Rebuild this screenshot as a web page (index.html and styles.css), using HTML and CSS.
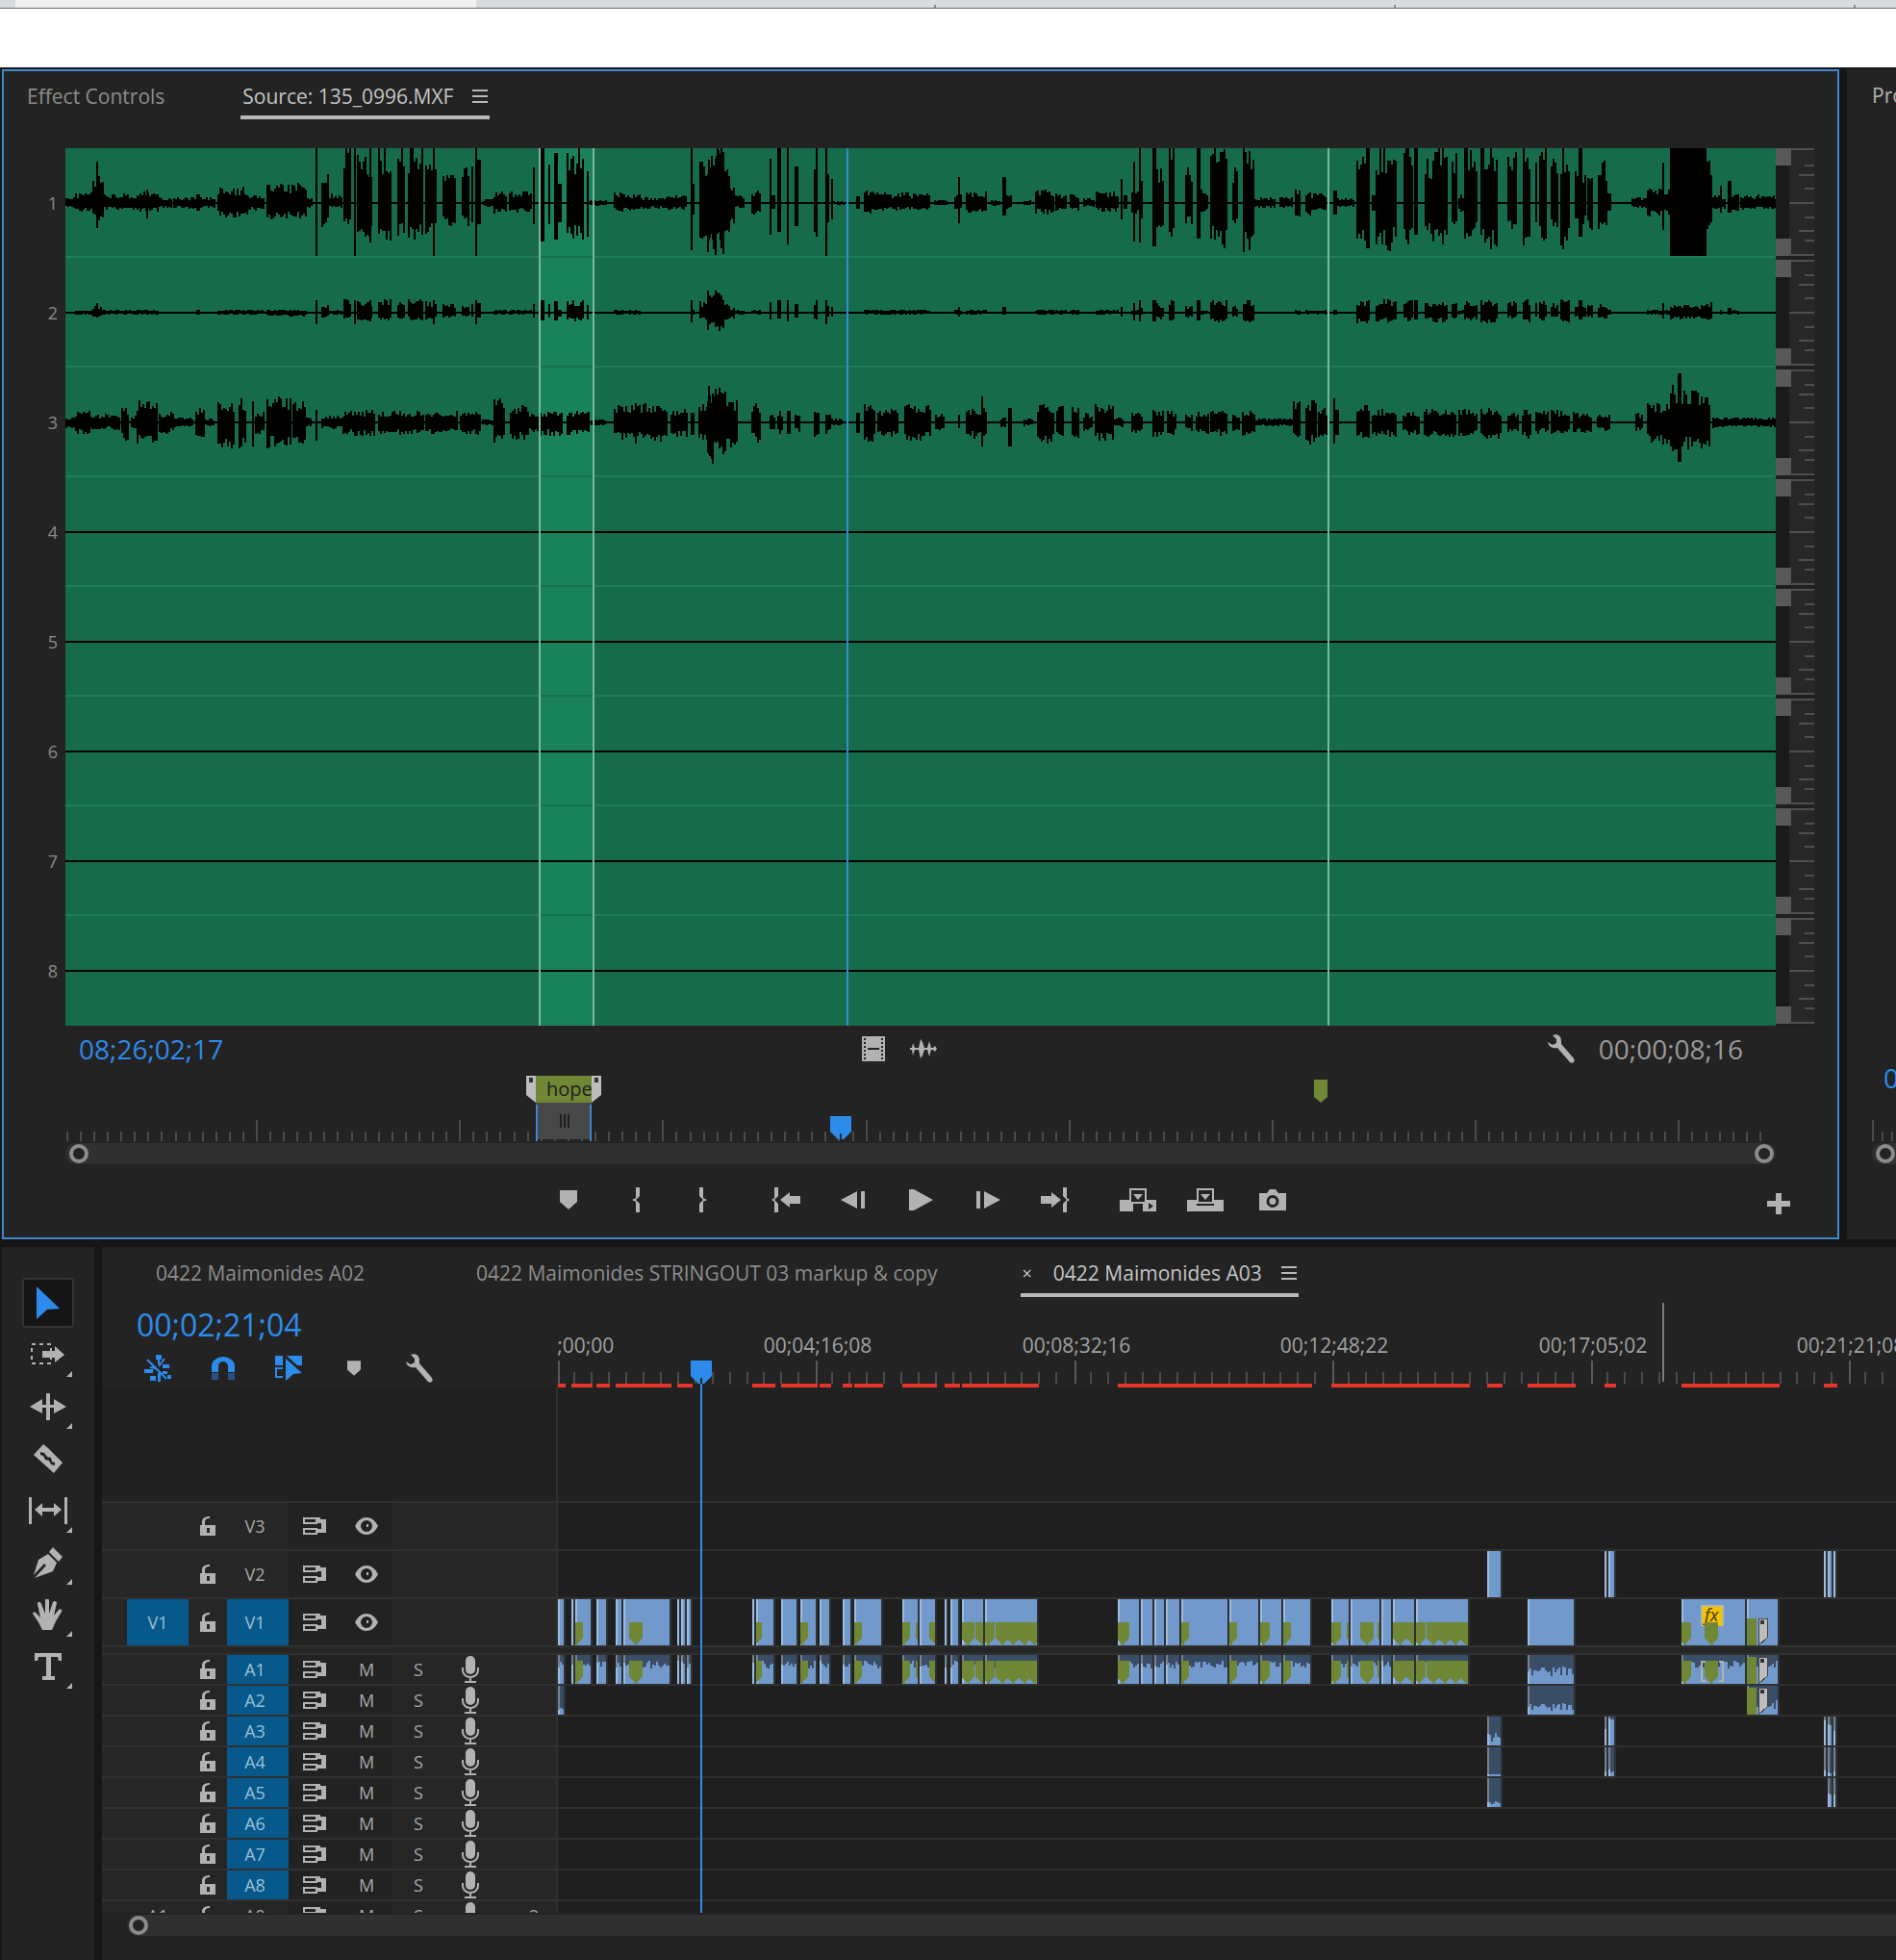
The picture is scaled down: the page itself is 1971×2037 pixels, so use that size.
FILE: index.html
```html
<!DOCTYPE html>
<html lang="en">
<head>
    <meta charset="UTF-8">
    <title>0422 Maimonides A03</title>
    <link rel="stylesheet" href="styles.css">
</head>
<body>
    <!-- shared icons -->
    <svg class="icon-defs" aria-hidden="true">
        <symbol id="i-marker" viewBox="0 0 18 20"><path d="M0 0h18v12l-9 8-9-8z"/></symbol>
        <symbol id="i-pin" viewBox="0 0 14 24"><path d="M0 0h14v18l-7 6-7-6z"/></symbol>
        <symbol id="i-in" viewBox="0 0 8 26"><path d="M8 0H4v11L0 13l4 2v11h4v-9l-4-4 4-4z"/></symbol>
        <symbol id="i-out" viewBox="0 0 8 26"><path d="M0 0h4v11l4 2-4 2v11H0v-9l4-4-4-4z"/></symbol>
        <symbol id="i-goin" viewBox="0 0 30 26"><path d="M7 0H3v11L0 13l3 2v11h4v-9l-4-4 4-4zM9 13l10-8v4h11v8H19v4z"/></symbol>
        <symbol id="i-goout" viewBox="0 0 30 26"><path d="M23 0h4v11l3 2-3 2v11h-4v-9l4-4-4-4zM21 13l-10-8v4H0v8h11v4z"/></symbol>
        <symbol id="i-back" viewBox="0 0 26 20"><path d="M0 10 17 1v18zM21 1h4v18h-4z"/></symbol>
        <symbol id="i-fwd" viewBox="0 0 26 20"><path d="M26 10 9 1v18zM1 1h4v18H1z"/></symbol>
        <symbol id="i-play" viewBox="0 0 26 22"><path d="M1 0h5l20 11L6 22H1z"/></symbol>
        <symbol id="i-insert" viewBox="0 0 38 24"><path fill-rule="evenodd" d="M0 12h10V0h18v12h10v12H24V14H14v10H0zM12 2v12h14V2zM30 15v7l5-3.500z"/><path d="M14 6h10l-5 6zM14 14h10v2H14z"/></symbol>
        <symbol id="i-overwrite" viewBox="0 0 38 24"><path fill-rule="evenodd" d="M0 12h10V0h18v12h10v12H0zM12 2v12h14V2zM10 16v2h18v-2z"/><path d="M14 6h10l-5 6z"/></symbol>
        <symbol id="i-camera" viewBox="0 0 28 22"><path fill-rule="evenodd" d="M0 4h8l3-4h6l3 4h8v18H0zM14 6a6 6 0 1 0 0 13 6 6 0 0 0 0-13zm0 3a3 3 0 1 1 0 7 3 3 0 0 1 0-7z"/></symbol>
        <symbol id="i-plus" viewBox="0 0 24 22"><path d="M9 0h6v8h9v6h-9v8H9v-8H0V8h9z"/></symbol>
        <symbol id="i-film" viewBox="0 0 24 26"><path fill-rule="evenodd" d="M0 0h24v26H0zM6 12v2h12v-2zM2 2v2h2V2zm0 4v2h2V6zm0 4v2h2v-2zm0 4v2h2v-2zm0 4v2h2v-2zm0 4v2h2v-2zM20 2v2h2V2zm0 4v2h2V6zm0 4v2h2v-2zm0 4v2h2v-2zm0 4v2h2v-2zm0 4v2h2v-2z"/></symbol>
        <symbol id="i-audio" viewBox="0 0 28 20"><path d="M0 9h2l1-5 2 5h4l2-9 2 3 2 6h3l2-7 2 7h2l2-2 2 3-2 3-2-2h-2l-2 7-2-7h-3l-2 6-2 3-2-9H5l-2 6-1-6H0z"/></symbol>
        <symbol id="i-wrench" viewBox="0 0 28 30"><path d="M5 1c5-2 9 1 9 6v3l13 15c2 3-1 6-4 4L10 14c-5 1-9-1-10-6l5 3 4-2V5z"/></symbol>
        <symbol id="i-nest" viewBox="0 0 28 28"><path d="M12 0h6v5h-2v5h-2V5h-2zM19 10h7v4h-7zM0 15h9v4H0zM6 22h6v5H6zM14 19h3v9h-3zM19 17h5v3h-5zM24 21h4v4h-4z"/><path class="stroke" d="M3 5l20 20M6 13l5 1M21 4l-6 8"/></symbol>
        <symbol id="i-magnet" viewBox="0 0 24 24"><path d="M0 16v-6a12 10 0 0 1 24 0v6h-7v-6a5 5 0 0 0-10 0v6z"/><path opacity=".45" d="M0 17h7v7H0zM17 17h7v7h-7z"/></symbol>
        <symbol id="i-linked" viewBox="0 0 28 26"><path d="M0 0h8v10H0zM12 0h16v10h-5zM11 3l17 15-9 1-8 7z"/><path class="stroke" d="M8 13H1v9h7"/></symbol>
        <symbol id="i-lock" viewBox="0 0 16 20"><path fill-rule="evenodd" d="M0 9h2V6c0-4 3-6 8-6v2C7 2 5 3 5 6v3h11v11H0zM7 12v5h3v-5z"/></symbol>
        <symbol id="i-sync" viewBox="0 0 24 18"><path fill-rule="evenodd" d="M0 0h15v7H0zM2 2v3h11V2zM0 11h15v7H0zM2 13v3h11v-3z"/><path d="M15 0h3v2h6v14h-9v-4h4V6h-4z"/></symbol>
        <symbol id="i-eye" viewBox="0 0 24 18"><path fill-rule="evenodd" d="M0 9C6-3 18-3 24 9 18 21 6 21 0 9zM12 3a6 6 0 1 0 0 12 6 6 0 0 0 0-12z"/><path d="M12 7h2v3h-2z"/></symbol>
        <symbol id="i-mic" viewBox="0 0 18 28"><rect x="4" y="0" width="10" height="19" rx="5"/><path class="stroke" d="M1 12v3a8 7 0 0 0 16 0v-3M9 22v5M3 27h12"/></symbol>
        <symbol id="i-arrow" viewBox="0 0 26 34"><path d="M1 0l24 23-13 1L1 34z"/></symbol>
        <symbol id="i-trackfwd" viewBox="0 0 36 24"><path class="dash" d="M1 1h20v20H1z"/><path d="M12 8h13V3l10 9-10 8v-5H12z"/></symbol>
        <symbol id="i-ripple" viewBox="0 0 38 28"><path d="M17 0h4v28h-4zM0 14 13 6v6h4v3h-4v6zM38 14 25 6v6h-4v3h4v6z"/></symbol>
        <symbol id="i-razor" viewBox="0 0 32 30"><path fill-rule="evenodd" d="M11 0l5 4 15 15-9 11L1 11zM8 8v3l3 1 2 4 4 1 2 4 4 1v-3l-3-1-1-4-4-1-3-4z"/></symbol>
        <symbol id="i-slip" viewBox="0 0 40 28"><path d="M0 0h3v28H0zM37 0h3v28h-3zM6 13l8-7v5h12V6l8 7-8 7v-5H14v5z"/></symbol>
        <symbol id="i-pen" viewBox="0 0 32 32"><path d="M21 0l10 10-4 5L17 5zM16 7l9 9-4 9L2 32l12-13-2-2L1 29l5-16z"/></symbol>
        <symbol id="i-hand" viewBox="0 0 32 32"><path d="M10 32 6 24 0 15c0-2 3-2 4 0l4 4L5 5c0-3 3-3 4 0l4 10V1c0-2 4-2 4 0v14l4-12c1-2 4-1 4 1l-3 13 5-6c2-2 4 0 3 2l-6 10-4 9z"/></symbol>
        <symbol id="i-type" viewBox="0 0 28 28"><path d="M0 0h28v8h-3l-1-4h-7v20h4v4H8v-4h4V4H4L3 8H0z"/></symbol>
    </svg>

    <div class="browser-strip">
        <span class="strip-tab"></span>
        <span class="strip-rest"></span>
    </div>
    <header class="blank-bar"></header>

    <main>
        <div class="monitors">
            <section class="panel source">
                <nav class="tabs">
                    <button class="tab">Effect Controls</button>
                    <button class="tab active">Source: 135_0996.MXF <span class="burger"></span></button>
                </nav>
                <div class="wave-area">
                    <ol class="channels">
                        <li>1</li><li>2</li><li>3</li><li>4</li><li>5</li><li>6</li><li>7</li><li>8</li>
                    </ol>
                    <svg id="wave" viewBox="0 0 1778 912" preserveAspectRatio="none"></svg>
                    <svg id="meters" viewBox="0 0 40 912"></svg>
                </div>
                <div class="source-body">
                    <div class="info">
                        <span class="timecode blue">08;26;02;17</span>
                        <div class="drag-icons">
                            <button aria-label="Drag video only"><svg class="film"><use href="#i-film"/></svg></button>
                            <button aria-label="Drag audio only"><svg class="audio"><use href="#i-audio"/></svg></button>
                        </div>
                        <div class="duration">
                            <button aria-label="Settings"><svg class="wrench"><use href="#i-wrench"/></svg></button>
                            <span class="timecode">00;00;08;16</span>
                        </div>
                    </div>
                    <div class="mini-ruler">
                        <svg id="source-ticks" viewBox="0 0 1778 68" preserveAspectRatio="none"></svg>
                        <div class="range">
                            <span class="range-name">hope</span>
                            <svg class="range-in" viewBox="0 0 10 28"><path d="M0 0h10v28L0 20z"/><path class="hole" d="M3 2h4v5H3z"/></svg>
                            <svg class="range-out" viewBox="0 0 10 28"><path d="M0 0h10v20L0 28z"/><path class="hole" d="M3 2h4v5H3z"/></svg>
                            <span class="range-grip"></span>
                        </div>
                        <svg class="note-pin"><use href="#i-pin"/></svg>
                        <svg class="source-head" viewBox="0 0 22 24"><path d="M0 0h22v16l-8 8h-2v-6h-2v6H8l-8-8z"/></svg>
                    </div>
                    <div class="zoom-bar"><span class="knob"></span><span class="knob"></span></div>
                </div>
                <div class="transport">
                    <div class="transport-group">
                        <button aria-label="Add marker"><svg width="18" height="20"><use href="#i-marker"/></svg></button>
                        <button aria-label="Mark in"><svg width="8" height="26"><use href="#i-in"/></svg></button>
                        <button aria-label="Mark out"><svg width="8" height="26"><use href="#i-out"/></svg></button>
                    </div>
                    <div class="transport-group">
                        <button aria-label="Go to in"><svg width="30" height="26"><use href="#i-goin"/></svg></button>
                        <button aria-label="Step back"><svg width="26" height="20"><use href="#i-back"/></svg></button>
                        <button aria-label="Play"><svg width="26" height="22"><use href="#i-play"/></svg></button>
                        <button aria-label="Step forward"><svg width="26" height="20"><use href="#i-fwd"/></svg></button>
                        <button aria-label="Go to out"><svg width="30" height="26"><use href="#i-goout"/></svg></button>
                    </div>
                    <div class="transport-group">
                        <button aria-label="Insert"><svg width="38" height="24"><use href="#i-insert"/></svg></button>
                        <button aria-label="Overwrite"><svg width="38" height="24"><use href="#i-overwrite"/></svg></button>
                        <button aria-label="Export frame"><svg width="28" height="22"><use href="#i-camera"/></svg></button>
                    </div>
                    <button class="add" aria-label="Button editor"><svg width="24" height="22"><use href="#i-plus"/></svg></button>
                </div>
            </section>

            <section class="panel program">
                <nav class="tabs"><button class="tab active-dim">Program: 0422 Maimonides A03</button></nav>
                <div class="program-foot">
                    <span class="timecode blue">00;02;21;04</span>
                    <div class="program-ticks"></div>
                    <div class="zoom-bar"><span class="knob"></span></div>
                </div>
            </section>
        </div>

        <div class="lower">
            <aside class="panel tools">
                <button class="tool selected" aria-label="Selection"><svg width="26" height="34"><use href="#i-arrow"/></svg></button>
                <button class="tool more" aria-label="Track select"><svg width="36" height="24"><use href="#i-trackfwd"/></svg></button>
                <button class="tool more" aria-label="Ripple edit"><svg width="38" height="28"><use href="#i-ripple"/></svg></button>
                <button class="tool" aria-label="Razor"><svg width="32" height="30"><use href="#i-razor"/></svg></button>
                <button class="tool more" aria-label="Slip"><svg width="40" height="28"><use href="#i-slip"/></svg></button>
                <button class="tool more" aria-label="Pen"><svg width="32" height="32"><use href="#i-pen"/></svg></button>
                <button class="tool more" aria-label="Hand"><svg width="32" height="32"><use href="#i-hand"/></svg></button>
                <button class="tool more" aria-label="Type"><svg width="28" height="28"><use href="#i-type"/></svg></button>
            </aside>

            <section class="panel timeline">
                <nav class="tabs">
                    <button class="tab">0422 Maimonides A02</button>
                    <button class="tab">0422 Maimonides STRINGOUT 03 markup &amp; copy</button>
                    <button class="tab active"><span class="close">×</span>0422 Maimonides A03 <span class="burger"></span></button>
                </nav>
                <div class="timeline-body">
                    <div class="timeline-top">
                        <div class="timeline-info">
                            <span class="timecode big blue">00;02;21;04</span>
                            <div class="options">
                                <button class="on" aria-label="Nest"><svg width="28" height="28"><use href="#i-nest"/></svg></button>
                                <button class="on" aria-label="Snap"><svg width="24" height="24"><use href="#i-magnet"/></svg></button>
                                <button class="on" aria-label="Linked selection"><svg width="28" height="26"><use href="#i-linked"/></svg></button>
                                <button aria-label="Add marker"><svg width="14" height="18"><use href="#i-marker"/></svg></button>
                                <button aria-label="Timeline settings"><svg width="28" height="30"><use href="#i-wrench"/></svg></button>
                            </div>
                        </div>
                        <div class="ruler">
                            <div id="ruler-labels"></div>
                            <svg id="ruler-ticks"></svg>
                        </div>
                    </div>
                    <div class="tracks" id="tracks"></div>
                    <div class="playhead"><svg viewBox="0 0 22 24"><path d="M0 0h22v16l-8 8h-2v-6h-2v6H8l-8-8z"/></svg></div>
                </div>
                <div class="zoom-bar"><span class="knob"></span></div>
            </section>
        </div>
    </main>
    <script src="script.js"></script>
</body>
</html>
```

FILE: styles.css
```css
*{
    box-sizing: border-box;
}
body{
    margin: 0;
    height: 100vh;
    min-height: 1700px;
    display: flex;
    flex-direction: column;
    overflow: hidden;
    background-color: #161616;
    color: #9a9a9a;
    font-family: "Open Sans", "Noto Sans", sans-serif;
    font-size: 21px;
    line-height: 28px;
}
button{
    font: inherit;
    color: inherit;
    background: none;
    border: none;
    padding: 0;
    display: flex;
    align-items: center;
    justify-content: center;
}
svg{
    display: block;
    fill: #b2b2b2;
}
.icon-defs{
    position: absolute;
    width: 0;
    height: 0;
}
.stroke{
    fill: none;
    stroke: currentColor;
    stroke-width: 2;
}
.dash{
    fill: none;
    stroke: #b2b2b2;
    stroke-width: 2;
    stroke-dasharray: 4 4;
}

/* top edge */
.browser-strip{
    flex: none;
    display: flex;
    height: 9px;
    padding-left: 16px;
    background-color: #d9dcdf;
    border-bottom: 1px solid #606468;
}
.strip-tab{
    width: 24.500%;
    background-color: #f1f1f2;
}
.strip-rest{
    flex: 1;
    background: repeating-linear-gradient(90deg, transparent 0 476px, #8a8f94 476px 478px) bottom / 100% 3px no-repeat;
}
.blank-bar{
    flex: none;
    height: 61px;
    background-color: #fff;
}

main{
    flex: 1;
    min-height: 0;
    display: flex;
    flex-direction: column;
    gap: 8px;
    padding: 2px 0 0 2px;
}
.panel{
    background-color: #232323;
}
.monitors{
    flex: none;
    display: flex;
    gap: 8px;
}

/* tabs */
.tabs{
    display: flex;
    height: 52px;
}
.tab{
    white-space: nowrap;
    padding: 10px 2px 4px;
    border-bottom: 4px solid transparent;
    color: #8c8c8c;
}
.tab.active{
    color: #c4c4c4;
    border-color: #b9b9b9;
}
.active-dim{
    color: #b4b4b4;
}
.burger{
    width: 16px;
    height: 14px;
    margin-left: 20px;
    border-top: 2px solid #b9b9b9;
    border-bottom: 2px solid #b9b9b9;
    background: linear-gradient(#b9b9b9, #b9b9b9) center / 16px 2px no-repeat;
}
.close{
    margin-right: 22px;
    font-size: 18px;
}

/* source monitor */
.source{
    flex: 1;
    min-width: 0;
    border: 2px solid #3f87cf;
}
.source .tabs{
    height: 50px;
    padding-left: 22px;
    gap: 77px;
}
.wave-area{
    display: flex;
    margin-top: 30px;
    padding-right: 24px;
}
.channels{
    list-style: none;
    margin: 0;
    padding: 0 8px 0 0;
    width: 64px;
    text-align: right;
    font-size: 18px;
    line-height: 114px;
    color: #8c8c8c;
}
#wave{
    flex: 1;
    min-width: 0;
    height: 912px;
    background-color: #166b4a;
}
#meters{
    width: 40px;
    height: 912px;
}
.source-body{
    margin: 0 64px;
}
.info{
    display: grid;
    grid-template-columns: 1fr auto 1fr;
    align-items: center;
    height: 52px;
    padding: 0 34px 4px 14px;
}
.timecode{
    font-size: 28px;
    line-height: 36px;
    font-weight: 500;
    color: #9a9a9a;
}
.blue{
    color: #2d8ceb;
}
.drag-icons{
    display: flex;
    align-items: center;
    gap: 26px;
    padding-right: 24px;
}
.film{
    width: 24px;
    height: 26px;
}
.audio{
    width: 28px;
    height: 20px;
}
.wrench{
    width: 28px;
    height: 30px;
}
.duration{
    display: flex;
    align-items: center;
    justify-content: flex-end;
    gap: 25px;
}
.mini-ruler{
    position: relative;
    height: 70px;
}
#source-ticks{
    width: 100%;
    height: 68px;
}
.range{
    position: absolute;
    left: 27.500%;
    top: 0;
    width: 58px;
    height: 68px;
    background: linear-gradient(#474747, #474747) 0 28px / 100% 38px no-repeat;
}
.range::before{
    content: "";
    position: absolute;
    inset: 30px 0 0;
    border: solid #3f87cf;
    border-width: 0 2px;
}
.range-name{
    display: block;
    height: 28px;
    padding-left: 11px;
    background-color: #708736;
    color: #202020;
    font-size: 20px;
}
.range-in, .range-out{
    position: absolute;
    top: 0;
    width: 10px;
    height: 28px;
    fill: #bdbdbd;
}
.range-in{
    left: -10px;
}
.range-out{
    right: -10px;
}
.hole{
    fill: #333;
}
.range-grip{
    position: absolute;
    left: 25px;
    top: 40px;
    width: 10px;
    height: 14px;
    background: repeating-linear-gradient(90deg, #1f1f1f 0 2px, transparent 2px 4px);
}
.note-pin{
    position: absolute;
    left: 73%;
    top: 4px;
    width: 14px;
    height: 24px;
    fill: #708736;
}
.source-head{
    position: absolute;
    left: 44.700%;
    top: 42px;
    width: 22px;
    height: 24px;
    fill: #2d8ceb;
}
.zoom-bar{
    display: flex;
    justify-content: space-between;
    align-items: center;
    height: 22px;
    padding: 0 2px 0 4px;
    border-radius: 11px;
    background-color: #303030;
}
.knob{
    width: 20px;
    height: 20px;
    border: 4px solid #8c8c8c;
    border-radius: 50%;
    background-color: #232323;
}
.transport{
    display: flex;
    justify-content: center;
    align-items: center;
    gap: 46px;
    height: 76px;
    padding-bottom: 2px;
    position: relative;
}
.transport-group{
    display: flex;
    gap: 30px;
}
.transport button{
    width: 40px;
    height: 40px;
}
.transport .add{
    position: absolute;
    right: 41px;
    top: 21px;
}

/* program monitor, cut off by the window edge */
.program{
    width: 51px;
    display: flex;
    flex-direction: column;
    justify-content: space-between;
    overflow: hidden;
}
.program .tabs{
    padding-left: 24px;
}
.program-foot{
    width: 400px;
    padding: 0 0 78px 26px;
}
.program-foot .timecode{
    display: block;
    padding-left: 12px;
    margin-bottom: 26px;
}
.program-ticks{
    height: 22px;
    margin-bottom: 2px;
    border-left: 2px solid #4b4b4b;
    background: repeating-linear-gradient(90deg, transparent 0 8px, #4b4b4b 8px 10px) bottom / 100% 10px no-repeat;
}

/* tools */
.lower{
    flex: 1;
    min-height: 0;
    display: flex;
    gap: 8px;
}
.tools{
    width: 96px;
    padding-top: 32px;
    display: flex;
    flex-direction: column;
    align-items: center;
    gap: 2px;
}
.tool{
    position: relative;
    width: 54px;
    height: 52px;
}
.tool.selected{
    background-color: #151515;
    border: 2px solid #343434;
    border-radius: 4px;
}
.selected svg, .on svg{
    fill: #2d8ceb;
    color: #2d8ceb;
}
.more::after{
    content: "";
    position: absolute;
    right: 2px;
    bottom: 3px;
    border: 3px solid;
    border-color: transparent #b2b2b2 #b2b2b2 transparent;
}

/* timeline */
.timeline{
    flex: 1;
    min-width: 0;
    display: flex;
    flex-direction: column;
    padding-bottom: 25px;
}
.timeline .tabs{
    flex: none;
    padding-left: 54px;
    gap: 112px;
}
.timeline .tab + .tab.active{
    margin-left: -28px;
}
.timeline-body{
    flex: 1;
    min-height: 0;
    display: flex;
    flex-direction: column;
    position: relative;
}
.timeline-top{
    display: flex;
    flex: none;
    height: 94px;
}
.timeline-info{
    width: 474px;
    padding: 9px 0 0 36px;
}
.timecode.big{
    display: block;
    font-size: 32px;
    line-height: 40px;
}
.options{
    display: flex;
    margin-top: 10px;
    gap: 28px;
    padding-left: 2px;
}
.options button{
    width: 40px;
    height: 30px;
}
.ruler{
    flex: 1;
    position: relative;
    overflow: hidden;
}
.ruler-label{
    position: absolute;
    top: 36px;
    width: 120px;
    margin-left: -60px;
    text-align: center;
    color: #a0a0a0;
}
#ruler-ticks{
    width: 100%;
    height: 94px;
}
.tracks{
    flex: 1;
    min-height: 0;
    overflow: hidden;
    display: flex;
    flex-direction: column;
    background-color: #212121;
}
.track{
    flex: none;
    display: flex;
    border-bottom: 2px solid #303030;
}
.track.video{
    height: 50px;
}
.track.audio-track{
    height: 32px;
}
.track.spacer{
    height: 120px;
}
.track.divider{
    height: 8px;
    background-color: #262626;
}
.track-head{
    width: 474px;
    display: grid;
    grid-template-columns: 64px 40px 64px 54px 54px 54px 54px 1fr;
    align-items: center;
    justify-items: center;
    padding-left: 26px;
    border-right: 2px solid #303030;
    background: linear-gradient(#222, #222) 194px 0 / 108px 100% no-repeat #262626;
    font-size: 18px;
    color: #a8a8a8;
}
.spacer .track-head{
    background: none;
}
.track-head button{
    width: 100%;
    height: 100%;
}
.track-head svg{
    color: #b2b2b2;
}
.track-head .name{
    padding-right: 6px;
}
.track-head .targeted{
    background-color: #06598a;
    color: #9cc0d8;
}
.gain{
    justify-self: start;
    padding-left: 34px;
}
.lane{
    flex: 1;
    height: 100%;
    background-color: #1f1f1f;
    shape-rendering: crispEdges;
}
.spacer .lane{
    background-color: #212121;
}
.fx{
    font: italic 18px "Noto Sans", sans-serif;
    fill: #4a3c00;
}
.playhead{
    position: absolute;
    left: 612px;
    top: 66px;
    bottom: 0;
    width: 22px;
    background: linear-gradient(#2d8ceb, #2d8ceb) 10px 24px / 2px 100% no-repeat;
}
.playhead svg{
    width: 22px;
    height: 24px;
    fill: #2d8ceb;
}
.timeline .zoom-bar{
    flex: none;
    margin: 2px 0 0 26px;
    padding: 0 2px;
    border-radius: 11px 0 0 11px;
}
```

FILE: script.js
```js
// steady noise so the waveforms look the same on every load
function noise(n){
    var v = Math.sin(n * 127.1 + 11.7) * 43758.5453;
    return v - Math.floor(v);
}

function rect(x, y, w, h, fill){
    return '<rect x="' + x + '" y="' + y + '" width="' + w + '" height="' + h + '" fill="' + fill + '"/>';
}

/* ---- source waveform ---- */
// [from, to, up, down], measured from the left edge of the panel
var channel1 = [
    [68,78,6,6],[78,96,10,9],[96,108,27,20],[100,102,43,26],[108,143,9,7],[143,165,12,9],[152,154,14,16],
    [165,179,6,6],[180,223,6,6],[204,208,9,8],[226,257,16,16],[257,275,9,8],[277,319,19,17],[319,324,5,5],
    [328,330,57,55],[334,342,34,27],[342,355,9,5],[357,364,57,30],[368,370,57,55],[371,386,46,38],[384,386,57,41],
    [393,407,57,41],[413,420,57,38],[424,440,57,40],[442,454,48,33],[450,452,57,55],[460,474,42,27],[480,487,38,24],
    [490,492,38,20],[494,496,57,55],[496,500,45,22],[502,513,4,4],[513,527,11,11],[529,553,12,10],[554,556,37,22],
    [562,566,57,40],[570,572,40,22],[576,580,52,38],[580,584,20,20],[589,606,57,42],[610,612,33,35],[613,630,3,3],
    [638,666,10,9],[666,694,6,6],[694,714,8,7],[718,720,57,49],[720,722,20,12],[727,735,51,40],[735,753,57,55],
    [736,750,50,40],[753,758,36,38],[758,764,24,30],[764,773,10,6],[781,790,13,12],[800,802,46,33],[802,806,8,6],
    [808,811,57,30],[818,820,57,43],[826,830,38,24],[846,848,35,30],[848,850,57,35],[858,860,57,55],[860,862,30,20],
    [864,866,25,17],[866,878,2,2],[890,893,7,6],[898,909,13,11],[909,967,10,8],[971,985,3,3],[992,1000,9,7],
    [996,998,27,21],[1004,1026,12,11],[1030,1040,3,3],[1042,1045,27,13],[1046,1051,8,6],[1064,1072,3,3],
    [1076,1095,13,12],[1097,1108,9,8],[1112,1121,9,9],[1126,1138,5,4],[1139,1162,11,9],[1165,1167,25,17],
    [1168,1172,8,6],[1176,1188,14,12],[1178,1180,43,40],[1184,1186,57,41],[1186,1188,23,16],[1198,1202,57,45],
    [1202,1210,38,33],[1215,1220,57,43],[1232,1240,37,27],[1244,1248,57,37],[1248,1256,14,12],[1258,1276,57,47],
    [1281,1287,37,24],[1292,1304,57,53],[1304,1326,6,5],[1330,1343,6,5],[1346,1351,13,15],[1357,1363,13,15],
    [1363,1378,9,8],[1386,1390,13,12],[1390,1408,5,4],[1410,1424,57,55],[1426,1430,8,8],[1430,1451,57,50],
    [1459,1468,57,43],[1470,1474,57,33],[1481,1488,44,33],[1489,1504,57,50],[1509,1514,57,35],[1516,1521,9,9],
    [1522,1535,57,38],[1539,1557,57,52],[1567,1577,57,31],[1583,1591,57,50],[1596,1598,42,20],[1600,1608,57,40],
    [1612,1619,43,26],[1622,1631,57,50],[1637,1648,31,26],[1641,1644,57,35],[1650,1655,40,29],[1661,1671,42,30],
    [1671,1674,10,8],[1696,1711,6,5],[1712,1735,15,14],[1728,1730,42,28],[1736,1774,57,56],[1774,1780,50,35],
    [1780,1794,8,7],[1788,1790,18,10],[1796,1800,23,10],[1800,1807,9,8],[1809,1846,8,7]
];
var channel3 = [
    [68,78,5,6],[78,93,11,14],[93,125,8,8],[126,134,14,20],[136,141,8,8],[142,163,22,22],[165,180,10,12],
    [181,200,5,5],[203,212,14,16],[213,223,4,4],[226,243,21,28],[248,255,23,27],[262,264,22,25],[265,275,12,12],
    [277,303,25,27],[304,318,20,24],[318,324,6,6],[328,330,13,19],[334,355,7,7],[356,365,11,13],[366,390,12,15],
    [393,440,11,13],[442,475,11,12],[478,500,10,14],[501,512,3,3],[513,525,24,23],[530,549,17,19],[550,560,10,10],
    [561,584,11,14],[589,612,12,14],[614,630,3,3],[638,650,17,18],[650,690,20,20],[660,662,20,22],[666,694,13,15],
    [697,714,14,16],[718,722,10,13],[726,735,18,19],[735,755,33,38],[736,738,38,33],[740,742,30,43],[753,766,22,26],
    [781,790,20,21],[800,806,9,12],[808,813,11,12],[818,822,12,12],[826,831,8,10],[846,852,12,16],[858,864,10,12],
    [864,876,4,4],[890,894,10,11],[898,909,19,20],[912,934,14,15],[940,968,18,19],[972,982,9,9],[996,998,8,6],
    [1004,1026,15,17],[1020,1022,27,25],[1040,1046,5,6],[1048,1052,15,25],[1064,1074,4,4],[1078,1096,18,23],
    [1098,1106,17,17],[1114,1121,18,19],[1126,1136,10,10],[1138,1158,18,19],[1158,1168,5,5],[1176,1188,10,12],
    [1198,1210,12,15],[1213,1222,11,13],[1232,1240,8,9],[1243,1256,10,12],[1258,1276,12,14],[1281,1288,8,10],
    [1291,1304,13,15],[1304,1343,4,4],[1344,1352,20,21],[1357,1368,21,23],[1370,1379,14,16],[1386,1388,25,22],
    [1388,1392,13,13],[1410,1424,17,18],[1426,1451,13,15],[1458,1475,10,14],[1480,1514,14,15],[1516,1536,13,15],
    [1539,1560,14,18],[1567,1578,11,13],[1582,1592,13,18],[1596,1609,11,12],[1612,1631,12,13],[1635,1655,10,12],
    [1660,1674,8,9],[1700,1708,9,10],[1712,1735,20,24],[1736,1778,30,30],[1738,1740,39,30],[1744,1748,51,41],
    [1760,1764,33,20],[1780,1794,5,6],[1794,1846,5,5]
];
// channel 2 is a quiet copy of channel 1
var channel2 = channel1.filter(function(s){
    return s[2] > 8;
}).map(function(s){
    if(s[0] == 1736){
        return [s[0], s[1], 8, 7];
    }
    return [s[0], s[1], s[2] > 20 ? s[2] * 0.23 : 3, s[3] > 16 ? s[3] * 0.21 : 2];
});
channel2.push([735,753,23,19]);

function wavePath(segments, mid, seed){
    var d = '';
    segments.forEach(function(s){
        var spike = s[1] - s[0] < 5;
        for(var x = s[0]; x < s[1]; x += 2){
            var up = spike ? s[2] : s[2] * (0.5 + 0.6 * noise(x + seed));
            var down = spike ? s[3] : s[3] * (0.5 + 0.5 * noise(x * 3 + seed));
            // the clipped blast near the end is a solid block
            if(seed == 1 && x >= 1736 && x < 1774){
                up = 57;
                down = 56;
            }
            up = Math.round(Math.min(up, 57));
            down = Math.round(Math.min(down, 55));
            d += 'M' + (x - 68) + ' ' + (mid - up) + 'h2v' + (up + down) + 'h-2z';
        }
    });
    return '<path fill="#000" d="' + d + '"/>';
}

var wave = rect(493, 0, 56, 912, '#19825b');
for(var c = 0; c < 8; c++){
    if(c < 7){
        wave += rect(0, c * 114 + 112, 1778, 2, '#1f7d59') + rect(494, c * 114 + 112, 55, 2, '#157050');
    }
    wave += rect(0, c * 114 + 56, 1778, 2, '#000');
}
wave += wavePath(channel1, 57, 1) + wavePath(channel2, 171, 1.5) + wavePath(channel3, 285, 3);
wave += rect(492, 0, 2, 912, '#78b79d') + rect(548, 0, 2, 912, '#78b79d');
wave += rect(812, 0, 2, 912, '#2f8fd0') + rect(1312, 0, 2, 912, '#78b79d');
document.getElementById('wave').innerHTML = wave;

// vertical zoom handles and level scale beside each channel
var meters = rect(0, 0, 14, 912, '#1a1a1a') + rect(14, 0, 26, 912, '#272727');
for(c = 0; c < 8; c++){
    var y0 = c * 114;
    meters += rect(0, y0 + 112, 40, c < 7 ? 4 : 2, '#202020');
    meters += rect(0, y0 + (c ? 2 : 0), 16, 18, '#595959') + rect(0, y0 + 94, 16, 18, '#595959');
    [[c ? 2 : 0,24],[17,10],[27,16],[41,10],[56,26],[71,10],[85,16],[95,10],[110,26]].forEach(function(m){
        meters += rect(40 - m[1], y0 + m[0], m[1], 2, '#4f4f4f');
    });
}
document.getElementById('meters').innerHTML = meters;

var ticks = '';
for(var t = -14; t < 112; t++){
    var major = t % 15 == 0;
    ticks += rect(Math.round(198 + t * 14.08), major ? 46 : 58, 2, major ? 22 : 10, '#4b4b4b');
}
document.getElementById('source-ticks').innerHTML = ticks;

/* ---- timeline ruler ---- */
var labels = ['00;00;00;00', '00;04;16;08', '00;08;32;16', '00;12;48;22', '00;17;05;02', '00;21;21;08'];
var labelHtml = '';
var ruler = '';
labels.forEach(function(text, i){
    var x = Math.round(i * 268.4);
    labelHtml += '<span class="ruler-label" style="left:' + (x + 2) + 'px">' + text + '</span>';
    ruler += rect(x, 66, 2, 24, '#5a5a5a');
    for(var j = 0; j < 14; j++){
        ruler += rect(Math.round(x + 16 + j * 17.95), 78, 2, 12, '#4b4b4b');
    }
});
// unrendered sections
[[0,8],[14,36],[40,54],[60,118],[124,140],[202,226],[232,270],[272,284],[296,306],[308,338],[358,394],[402,418],
 [420,500],[582,784],[804,948],[966,982],[1008,1058],[1088,1100],[1168,1270],[1316,1330]].forEach(function(s){
    ruler += rect(s[0], 90, s[1] - s[0], 4, '#e6352b');
});
ruler += rect(1148, 6, 2, 82, '#7c7c7c');
document.getElementById('ruler-labels').innerHTML = labelHtml;
document.getElementById('ruler-ticks').innerHTML = ruler;

/* ---- tracks ---- */
var mainClips = [
    [580,586],[594,596],[598,614],[620,630],[640,646],[648,696],[704,706],[708,712],[714,718],[782,784],[786,804],
    [812,828],[832,848],[852,862],[876,884],[888,916],[938,954],[956,972],[982,984],[988,996],[1000,1022],
    [1024,1078],[1162,1184],[1186,1198],[1200,1210],[1212,1226],[1228,1276],[1278,1308],[1310,1332],[1334,1362],
    [1384,1402],[1404,1434],[1436,1446],[1448,1470],[1472,1526],[1588,1636],[1748,1814],[1816,1848]
];
// clip start -> marker centres
var pins = {
    598:[599], 648:[661], 786:[785], 832:[833], 888:[889], 938:[939,959], 956:[973], 1000:[1006,1021],
    1024:[1027,1042,1053,1065,1075], 1162:[1167], 1228:[1229], 1278:[1279], 1310:[1313], 1334:[1335],
    1384:[1387,1407], 1404:[1421,1439], 1448:[1455,1469], 1472:[1475,1490,1502,1513,1524], 1748:[1751,1779]
};
// audio clips: [from, to, wave top, wave spread]
var audio = {
    A1: mainClips.map(function(s){ return [s[0], s[1], s[0] == 1588 ? 12 : 6, s[0] == 1588 ? 10 : 8]; }),
    A2: [[580,586,22,4],[1588,1636,18,8],[1816,1848,14,12]],
    A3: [[1546,1560,16,10],[1668,1670,12,1],[1672,1678,2,2],[1896,1898,4,1],[1900,1904,8,1],[1906,1908,14,1]],
    A4: [[1546,1560,28,0],[1668,1670,24,1],[1672,1678,22,6],[1896,1898,24,1],[1900,1904,26,1],[1906,1908,24,1]],
    A5: [[1546,1560,24,3],[1900,1904,14,4],[1906,1908,16,1]]
};
var video = {
    V1: mainClips,
    V2: [[1546,1560],[1668,1670],[1672,1678],[1896,1898],[1900,1904],[1906,1908]]
};

function pinShapes(start, h){
    return (pins[start] || []).map(function(p){
        var x = p - start;
        return '<path fill="#708736" d="M' + (x - 7) + ' ' + (h - 24) + 'h14v16l-5 6-2 2-2-2-5-6z"/>';
    }).join('');
}

function clipSvg(s, h, isAudio, withPins){
    var w = s[1] - s[0];
    var body = rect(0, 0, w, h, isAudio ? '#3a4d66' : '#7199cb') + rect(0, 0, 2, h, isAudio ? '#76818e' : '#9dbbdc');
    if(isAudio){
        for(var x = 0; x < w; x += 2){
            var y = s[2] + Math.round(s[3] * noise(s[0] + x));
            body += rect(x, y, 2, h - y, x ? '#7199cb' : '#9dbbdc');
        }
    }
    if(withPins){
        body += pinShapes(s[0], h);
    }
    return rect(s[1] - 580, 0, 2, h, '#2d3236') +
        '<svg x="' + (s[0] - 580) + '" y="0" width="' + w + '" height="' + h + '">' + body + '</svg>';
}

function rangeMarker(h){
    return rect(1236, h - 28, 10, 28, '#708736') +
        '<path fill="#bdbdbd" stroke="#444" d="M1248 ' + (h - 28) + 'h9v20l-9 8z"/>' + rect(1250, h - 26, 4, 4, '#333');
}

function lane(name, h){
    var out = '';
    (video[name] || []).forEach(function(s){
        out += clipSvg(s, h, false, name == 'V1');
    });
    (audio[name] || []).forEach(function(s){
        out += clipSvg(s, h, true, name == 'A1');
    });
    if(name == 'V1'){
        out += rect(1188, 6, 24, 22, '#b8b8a0') + rect(1190, 8, 20, 20, '#f5c400');
        out += '<text class="fx" x="1192" y="23">fx</text>' +
            '<path fill="#708736" d="M1192 24h14v16l-7 8-7-8z"/>';
    }
    if(name == 'A1'){
        out += '<path fill="none" stroke="#b2b2b2" stroke-width="2" d="M1193 7h-4v20h4M1207 7h4v20h-4"/>';
    }
    if(name == 'V1' || name == 'A1' || name == 'A2'){
        out += rangeMarker(h);
    }
    return '<svg class="lane">' + out + '</svg>';
}

function icon(id, w, h){
    return '<svg width="' + w + '" height="' + h + '"><use href="#i-' + id + '"/></svg>';
}

function track(name){
    var isVideo = name[0] == 'V';
    var last = name == 'A9';
    var source = name == 'V1' ? '<button class="targeted">V1</button>' : last ? '<button>A1</button>' : '<span></span>';
    var targeted = name != 'V3' && name != 'V2' && !last;
    var head = source +
        '<button aria-label="Lock ' + name + '">' + icon('lock', 16, 20) + '</button>' +
        '<button class="name' + (targeted ? ' targeted' : '') + '">' + name + '</button>' +
        '<button aria-label="Sync lock ' + name + '">' + icon('sync', 24, 18) + '</button>';
    if(isVideo){
        head += '<button aria-label="Show ' + name + '">' + icon('eye', 24, 18) + '</button>';
    }else{
        head += '<button>M</button><button>S</button>' +
            '<button aria-label="Record ' + name + '">' + icon('mic', 18, 28) + '</button>' +
            (last ? '<span class="gain">2</span>' : '');
    }
    return '<div class="track ' + (isVideo ? 'video' : 'audio-track') + '"><div class="track-head">' + head + '</div>' +
        lane(name, isVideo ? 48 : 30) + '</div>';
}

var empty = '<div class="track-head"></div><svg class="lane"></svg>';
document.getElementById('tracks').innerHTML =
    '<div class="track spacer">' + empty + '</div>' +
    ['V3', 'V2', 'V1'].map(track).join('') +
    '<div class="track divider"></div>' +
    ['A1', 'A2', 'A3', 'A4', 'A5', 'A6', 'A7', 'A8', 'A9'].map(track).join('');
```
